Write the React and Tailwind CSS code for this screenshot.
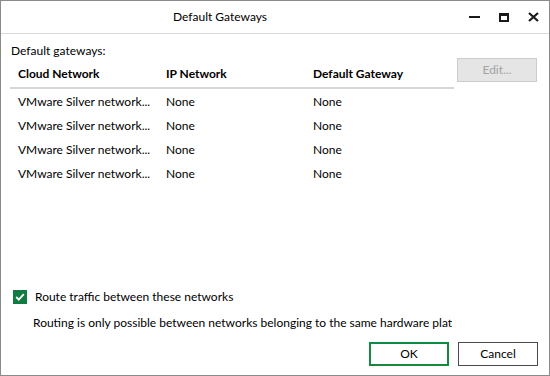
import React from 'react'

const rows = [
  { cloud: 'VMware Silver network...', ip: 'None', gateway: 'None' },
  { cloud: 'VMware Silver network...', ip: 'None', gateway: 'None' },
  { cloud: 'VMware Silver network...', ip: 'None', gateway: 'None' },
  { cloud: 'VMware Silver network...', ip: 'None', gateway: 'None' },
]

const App = () => {
  return (
    <div className="w-[550px] h-[376px] bg-white border border-[#8a8a8a] flex flex-col text-[12px] leading-[16px] text-black overflow-hidden font-['Lato',sans-serif]">
      {/* Title bar */}
      <div className="h-[33px] shrink-0 flex items-center border-b border-[#d9d9d9]">
        <div className="w-[438px] text-center">Default Gateways</div>
        <div className="flex items-center gap-[19px] pl-[30px]">
          <span className="w-[11px] h-[2px] bg-[#1a1a1a] block" />
          <span className="w-[10px] h-[9px] border-[2px] border-t-[3px] border-[#1a1a1a] block" />
          <svg width="11" height="10" viewBox="0 0 11 10">
            <path d="M1 1 L10 9 M10 1 L1 9" stroke="#1a1a1a" strokeWidth="2.2" />
          </svg>
        </div>
      </div>

      {/* Body */}
      <div className="flex-1 flex flex-col pl-[9px] pr-[11px] pt-[9px] pb-[9px]">
        <div className="pl-[1px]">Default gateways:</div>

        <div className="flex gap-[3px]">
          <div className="w-[444px]">
            <div className="h-[30px] pt-[2px] flex items-center font-bold border-b-2 border-[#d6d6d6]">
              <div className="w-[148px] pl-[8px]">Cloud Network</div>
              <div className="w-[147px] pl-[8px]">IP Network</div>
              <div className="flex-1 pl-[8px]">Default Gateway</div>
            </div>
            {rows.map((r, i) => (
              <div key={i} className="h-[24px] pt-[2px] flex items-center">
                <div className="w-[148px] pl-[8px] whitespace-nowrap">{r.cloud}</div>
                <div className="w-[147px] pl-[8px]">{r.ip}</div>
                <div className="flex-1 pl-[8px]">{r.gateway}</div>
              </div>
            ))}
          </div>
          <button className="w-[80px] h-[24px] -mt-px bg-[#e5e5e5] border border-[#cccccc] text-[#a3a3a3]">
            Edit...
          </button>
        </div>

        <div className="flex-1" />

        <div className="flex items-center h-[16px] pl-[3px]">
          <span className="w-[14px] h-[14px] bg-[#107c41] flex items-center justify-center">
            <svg width="10" height="8" viewBox="0 0 10 8">
              <path d="M1.2 4 L3.8 6.6 L8.8 1.2" stroke="white" strokeWidth="1.8" fill="none" />
            </svg>
          </span>
          <span className="ml-[8px]">Route traffic between these networks</span>
        </div>

        <div className="mt-[10px] ml-[23px] w-[419px] whitespace-nowrap overflow-hidden">
          Routing is only possible between networks belonging to the same hardware platform
        </div>

        <div className="mt-[11px] flex justify-end gap-[9px]">
          <button className="w-[80px] h-[24px] border-2 border-[#138a3e] bg-white">OK</button>
          <button className="w-[80px] h-[24px] border border-[#4a4a4a] bg-white">Cancel</button>
        </div>
      </div>
    </div>
  )
}

export default App
